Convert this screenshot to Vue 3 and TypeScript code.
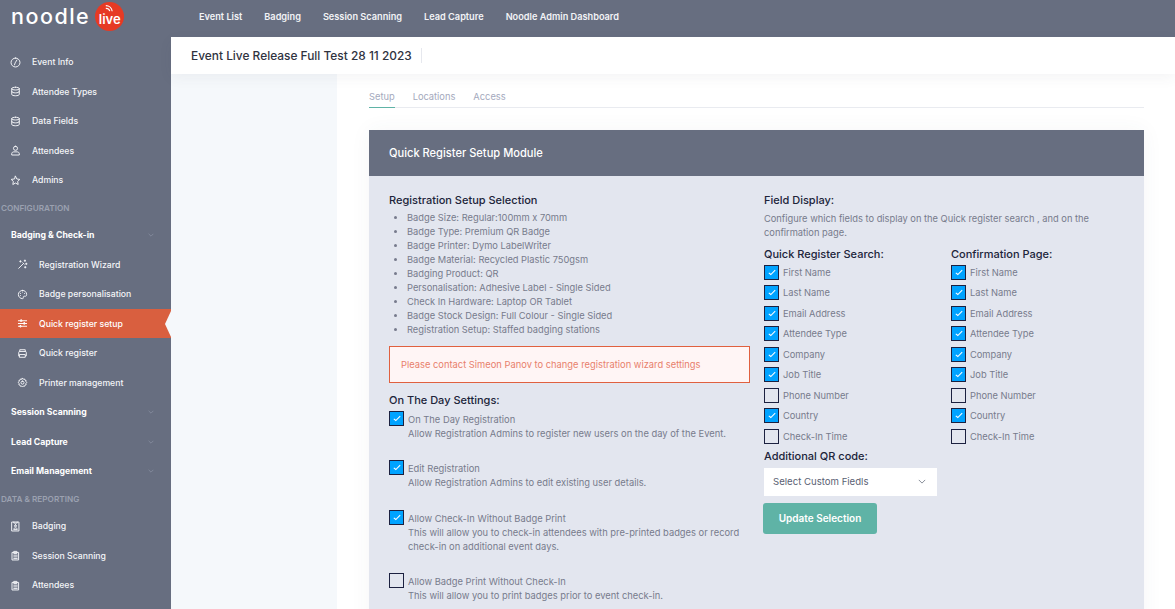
<script setup lang="ts">
type Item = { label: string; icon?: string; kind?: string; active?: boolean };
const icons: Record<string, string> = {
  clock: 'M8 1.500a6.500 6.500 0 1 0 0 13 6.500 6.500 0 0 0 0-13zM10 4.500 7.500 8.500 6.500 11.500',
  db: 'M8 1.800c3 0 5.500.8 5.500 2s-2.500 2-5.500 2-5.500-.8-5.500-2 2.500-2 5.500-2zM2.500 3.800v8.400c0 1.200 2.500 2 5.500 2s5.500-.8 5.500-2V3.800M2.500 8c0 1.200 2.500 2 5.500 2s5.500-.8 5.500-2',
  user: 'M8 1.800a3 3 0 1 0 0 6 3 3 0 0 0 0-6zM2.500 14v-1.500c0-1.500 1.500-2.500 3-2.500h5c1.500 0 3 1 3 2.500V14z',
  star: 'M8 1.800l1.900 4 4.400.6-3.200 3 .8 4.400L8 11.700l-3.900 2.100.8-4.400-3.200-3 4.400-.6z',
  wand: 'M2.500 13.500 9.500 6.500M8.500 5.500l2 2M11.500 1.500v2M10.500 2.500h2M13.500 6v2M12.500 7h2M5 2.500v2M4 3.500h2M12 11v2M11 12h2',
  palette: 'M8 2a6 6 0 0 0 0 12c1.200 0 1.500-.8 1.200-1.500-.4-1 .1-2 1.300-2h1.800c1 0 1.700-.8 1.700-2.500C14 4.500 11.500 2 8 2zM5 6.500h.1M5 9.500h.1M8 4.500h.1M11 6.500h.1',
  sliders: 'M2 4h12M2 8h12M2 12h12M6 2.800a1.200 1.200 0 1 0 0 2.400 1.200 1.200 0 0 0 0-2.400zM10.500 6.800a1.200 1.200 0 1 0 0 2.400 1.200 1.200 0 0 0 0-2.400zM5 10.800a1.200 1.200 0 1 0 0 2.400 1.200 1.200 0 0 0 0-2.400z',
  printer: 'M4 5V2.500h8V5M3.500 11.500h-1V6.500A1.500 1.500 0 0 1 4 5h8a1.500 1.500 0 0 1 1.500 1.500v5h-1M4 9.500h8v4H4z',
  gear: 'M8 1.800l1.200 1.400 1.800-.3.600 1.700 1.700.6-.3 1.800 1.200 1.200L13 9.400l.3 1.800-1.700.6-.6 1.700-1.800-.3L8 14.600l-1.200-1.400-1.800.3-.6-1.700-1.700-.6.3-1.800L1.800 8.200 3 7l-.3-1.800 1.700-.6.6-1.700 1.800.3zM8 6a2.200 2.200 0 1 0 0 4.400A2.200 2.200 0 0 0 8 6z',
  badge: 'M3 1.500h10v13H3zM5.500 1.500V3h5V1.500M8 5.500a1.500 1.500 0 1 0 0 3 1.500 1.500 0 0 0 0-3zM5.500 12c0-1.500 1-2 2.500-2s2.500.5 2.500 2z',
  clip: 'M3.500 3.500h9v11h-9zM6 2h4v3H6zM5.500 7.500h5M5.500 10h5M5.500 12.500h5',
};
const nav: Item[] = [
  { label: 'Event Info', icon: 'clock' },
  { label: 'Attendee Types', icon: 'db' },
  { label: 'Data Fields', icon: 'db' },
  { label: 'Attendees', icon: 'user' },
  { label: 'Admins', icon: 'star' },
  { label: 'CONFIGURATION', kind: 'section' },
  { label: 'Badging & Check-in', kind: 'group' },
  { label: 'Registration Wizard', icon: 'wand', kind: 'sub' },
  { label: 'Badge personalisation', icon: 'palette', kind: 'sub' },
  { label: 'Quick register setup', icon: 'sliders', kind: 'sub', active: true },
  { label: 'Quick register', icon: 'printer', kind: 'sub' },
  { label: 'Printer management', icon: 'gear', kind: 'sub' },
  { label: 'Session Scanning', kind: 'group' },
  { label: 'Lead Capture', kind: 'group' },
  { label: 'Email Management', kind: 'group' },
  { label: 'DATA & REPORTING', kind: 'section' },
  { label: 'Badging', icon: 'badge' },
  { label: 'Session Scanning', icon: 'clip' },
  { label: 'Attendees', icon: 'clip' },
];
const topLinks = ['Event List', 'Badging', 'Session Scanning', 'Lead Capture', 'Noodle Admin Dashboard'];
const setup = [
  'Badge Size: Regular:100mm x 70mm',
  'Badge Type: Premium QR Badge',
  'Badge Printer: Dymo LabelWriter',
  'Badge Material: Recycled Plastic 750gsm',
  'Badging Product: QR',
  'Personalisation: Adhesive Label - Single Sided',
  'Check In Hardware: Laptop OR Tablet',
  'Badge Stock Design: Full Colour - Single Sided',
  'Registration Setup: Staffed badging stations',
];
const settings = [
  { title: 'On The Day Registration', desc: ['Allow Registration Admins to register new users on the day of the Event.'], on: true },
  { title: 'Edit Registration', desc: ['Allow Registration Admins to edit existing user details.'], on: true },
  { title: 'Allow Check-In Without Badge Print', desc: ['This will allow you to check-in attendees with pre-printed badges or record', 'check-in on additional event days.'], on: true },
  { title: 'Allow Badge Print Without Check-In', desc: ['This will allow you to print badges prior to event check-in.'], on: false },
];
const fields = [
  { name: 'First Name', on: true },
  { name: 'Last Name', on: true },
  { name: 'Email Address', on: true },
  { name: 'Attendee Type', on: true },
  { name: 'Company', on: true },
  { name: 'Job Title', on: true },
  { name: 'Phone Number', on: false },
  { name: 'Country', on: true },
  { name: 'Check-In Time', on: false },
];
const fieldCols = ['Quick Register Search:', 'Confirmation Page:'];
</script>

<template>
  <div class="page">
    <header class="top">
      <div class="logo">
        <span class="word">noodle</span>
        <span class="live">
          <svg class="wifi" viewBox="0 0 12 10" width="10" height="8"><path d="M2 2a8 8 0 0 1 8 7M2 5.500a5 5 0 0 1 5 3.500" fill="none" stroke="#fff" stroke-width="1.400" /></svg>
          <span>live</span>
        </span>
      </div>
      <nav class="toplinks"><span v-for="l in topLinks" :key="l">{{ l }}</span></nav>
    </header>
    <div class="below">
      <aside class="side">
        <div v-for="(n, i) in nav" :key="i" class="row" :class="[n.kind, { active: n.active }]">
          <svg v-if="n.icon" class="ico" viewBox="0 0 16 16" width="11" height="11"><path :d="icons[n.icon]" fill="none" stroke="currentColor" stroke-width="1.400" stroke-linejoin="round" stroke-linecap="round" /></svg>
          <span class="lbl">{{ n.label }}</span>
          <svg v-if="n.kind === 'group'" class="chev" viewBox="0 0 10 6" width="6" height="4"><path d="M1 1l4 4 4-4" fill="none" stroke="#8b92a3" stroke-width="1.200" /></svg>
        </div>
      </aside>
      <div class="right">
        <div class="titlebar"><h1>Event Live Release Full Test 28 11 2023</h1></div>
        <div class="content">
          <div class="rail"></div>
          <main class="main">
            <div class="tabs">
              <span class="tab on">Setup</span><span class="tab">Locations</span><span class="tab">Access</span>
            </div>
            <section class="card">
              <div class="cardhead">Quick Register Setup Module</div>
              <div class="cardbody">
                <div class="col left">
                  <h3>Registration Setup Selection</h3>
                  <ul><li v-for="s in setup" :key="s">{{ s }}</li></ul>
                  <div class="alert">Please contact Simeon Panov to change registration wizard settings</div>
                  <h3 class="otd">On The Day Settings:</h3>
                  <div v-for="s in settings" :key="s.title" class="setting">
                    <span class="cb" :class="{ on: s.on }"><svg v-if="s.on" viewBox="0 0 10 8" width="8" height="7"><path d="M1 4.500l2.500 2L9 1" fill="none" stroke="#fff" stroke-width="1.300" /></svg></span>
                    <div class="stext">
                      <div>{{ s.title }}</div>
                      <div v-for="d in s.desc" :key="d">{{ d }}</div>
                    </div>
                  </div>
                </div>
                <div class="col rightcol">
                  <h3>Field Display:</h3>
                  <p class="desc">Configure which fields to display on the Quick register search , and on the confirmation page.</p>
                  <div class="fieldcols">
                    <div v-for="c in fieldCols" :key="c" class="fieldcol">
                      <h3 class="fh">{{ c }}</h3>
                      <div v-for="f in fields" :key="f.name" class="field">
                        <span class="cb" :class="{ on: f.on }"><svg v-if="f.on" viewBox="0 0 10 8" width="8" height="7"><path d="M1 4.500l2.500 2L9 1" fill="none" stroke="#fff" stroke-width="1.300" /></svg></span>
                        <span>{{ f.name }}</span>
                      </div>
                    </div>
                  </div>
                  <h3 class="qr">Additional QR code:</h3>
                  <div class="select"><span>Select Custom Fiedls</span><svg viewBox="0 0 10 6" width="8" height="5"><path d="M1 1l4 4 4-4" fill="none" stroke="#6b7280" stroke-width="1" /></svg></div>
                  <button class="btn" type="button">Update Selection</button>
                </div>
              </div>
            </section>
          </main>
        </div>
      </div>
    </div>
  </div>
</template>

<style>
html, body { margin: 0; padding: 0; overflow: hidden; }
</style>

<style scoped>
.page { width: 1175px; height: 609px; overflow: hidden; font-family: Inter, "Liberation Sans", sans-serif; background: #fff; display: flex; flex-direction: column; }
.top { height: 37px; background: #676e80; display: flex; align-items: center; flex: none; padding-bottom: 5px; box-sizing: border-box; }
.logo { width: 171px; padding-left: 11px; box-sizing: border-box; display: flex; align-items: center; gap: 5px; flex: none; }
.word { font-size: 21.500px; font-weight: 500; color: #fff; letter-spacing: 1.500px; line-height: 28px; }
.live { width: 29px; height: 29px; border-radius: 50%; background: #e63a24; color: #fff; position: relative; display: flex; align-items: center; justify-content: center; font-size: 13px; font-weight: 600; padding-top: 5px; box-sizing: border-box; }
.wifi { position: absolute; top: 2px; left: 9px; }
.toplinks { display: flex; gap: 22px; padding-left: 28px; font-size: 9.200px; font-weight: 600; color: #f2f3f6; }
.below { flex: 1; display: flex; min-height: 0; }
.side { width: 171px; flex: none; background: #676e80; padding-top: 10.250px; color: #fff; }
.row { height: 29.500px; display: flex; align-items: center; font-size: 8.700px; font-weight: 500; padding-left: 10px; box-sizing: border-box; position: relative; color: #f4f5f8; }
.ico { margin-right: 11px; flex: none; }
.row.sub { padding-left: 17px; }
.row.group { font-weight: 700; padding-left: 11px; color: #fff; }
.chev { position: absolute; left: 148px; top: 13px; }
.row.section { height: 25.500px; padding-left: 1px; font-size: 8.200px; font-weight: 600; color: #9ba1b0; }
.row.active { background: #d95f3f; color: #fff; }
.row.active::after { content: ""; position: absolute; right: 0; top: 50%; margin-top: -13px; border: 13px solid transparent; border-right: 6px solid #f5f8fb; border-left: 0; }
.right { flex: 1; display: flex; flex-direction: column; min-width: 0; }
.titlebar { height: 37px; flex: none; background: #fff; display: flex; align-items: center; padding-left: 20px; box-shadow: 0 4px 14px rgba(60, 70, 90, 0.06); position: relative; }
h1 { margin: 0; font-size: 11.900px; font-weight: 500; color: #30333f; padding-right: 9px; border-right: 1px solid #e6e8ee; line-height: 15px; }
.content { flex: 1; display: flex; min-height: 0; }
.rail { width: 166px; flex: none; background: #f5f8fb; }
.main { flex: 1; padding: 0 31px 0 32px; min-width: 0; }
.tabs { display: flex; gap: 18px; height: 33px; align-items: flex-end; border-bottom: 1px solid #e9ebf0; font-size: 9.300px; color: #a4a9bd; }
.tab { padding-bottom: 5px; margin-bottom: -1px; border-bottom: 1px solid transparent; }
.tab.on { border-bottom-color: #5fb3a6; }
.card { margin-top: 22px; box-shadow: 0 0 20px rgba(60, 70, 90, 0.05); }
.cardhead { height: 46px; background: #676e80; color: #fff; display: flex; align-items: center; padding: 0 0 1px 20px; box-sizing: border-box; font-size: 11.100px; font-weight: 500; }
.cardbody { background: #e3e6ef; padding: 17px 20px 0; display: grid; grid-template-columns: 361px 1fr; column-gap: 14px; height: 500px; box-sizing: border-box; color: #777b8c; font-size: 9.300px; }
h3 { margin: 0; font-size: 11px; font-weight: 500; color: #20243a; line-height: 14px; }
ul { margin: 4px 0 0; padding: 0 0 0 18px; line-height: 14px; }
.alert { margin-top: 9px; height: 37px; box-sizing: border-box; border: 1px solid #e0603f; background: #fff5f5; color: #e8806c; display: flex; align-items: center; padding-left: 11px; font-size: 9.350px; }
.otd { margin-top: 10px; }
.setting { display: flex; gap: 4px; margin-bottom: 21.400px; margin-top: 5px; line-height: 14px; font-size: 9.350px; }
.setting + .setting { margin-top: 0; }
.setting .cb { margin-top: -1px; }
.stext { margin-top: 1px; margin-bottom: -1px; }
.cb { width: 15px; height: 15px; box-sizing: border-box; border: 1.500px solid #1c2140; flex: none; display: flex; align-items: center; justify-content: center; }
.cb.on { background: #00a3ff; }
.desc { margin: 5px 0 0; line-height: 14px; }
.fieldcols { display: grid; grid-template-columns: 187px 1fr; margin-top: 7px; }
.fh { margin-bottom: 1px; }
.field { display: flex; align-items: center; gap: 4px; height: 20.500px; }
.qr { margin-top: 2px; }
.select { margin-top: 5px; width: 173px; height: 28px; background: #fff; display: flex; align-items: center; justify-content: space-between; padding: 0 11px 0 9px; box-sizing: border-box; color: #5a5f73; font-size: 9.600px; }
.btn { display: block; margin-top: 7px; margin-left: -1px; width: 114px; height: 31px; border: none; border-radius: 3px; background: #5fb3a6; color: #fff; font: 600 10px Inter, sans-serif; }
</style>
